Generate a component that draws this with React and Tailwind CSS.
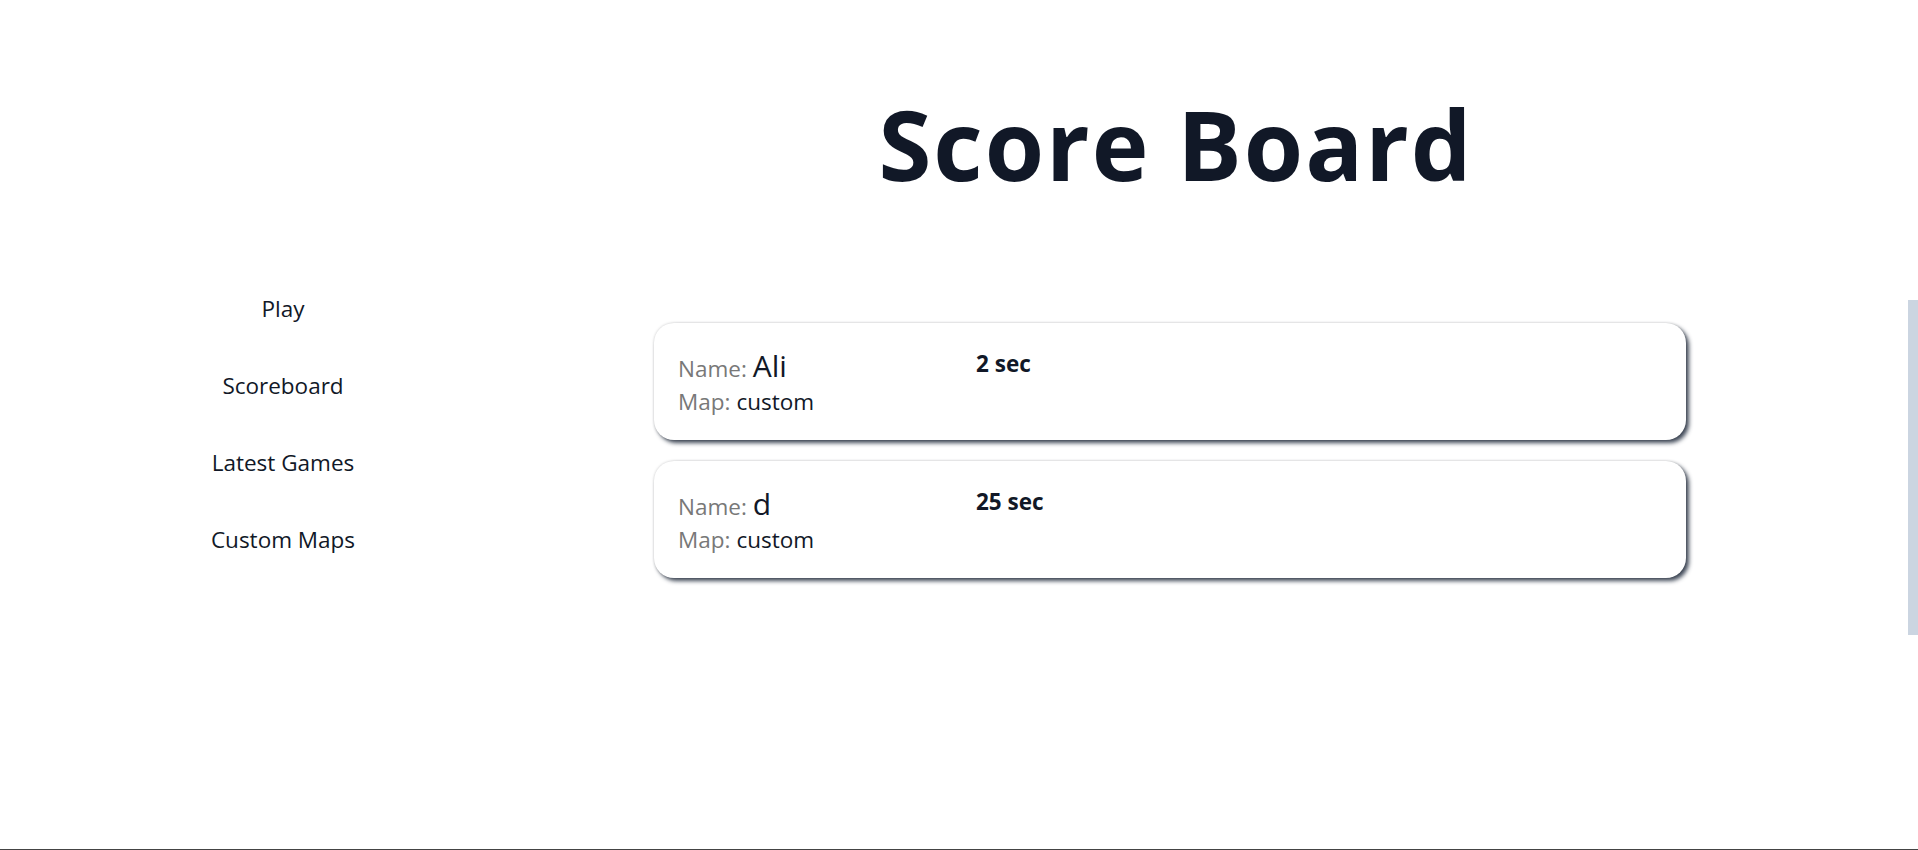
import React from 'react';

const navItems = ['Play', 'Scoreboard', 'Latest Games', 'Custom Maps'];

const scores = [
  { name: 'Ali', map: 'custom', time: '2 sec' },
  { name: 'd', map: 'custom', time: '25 sec' },
];

const ScoreCard = ({ score }) => (
  <div className='bg-white rounded-[20px] pl-6 pr-6 pt-[25px] pb-[23px] flex items-start shadow-[0_0_3px_rgba(0,0,0,0.18),3px_3px_4px_rgba(45,55,72,0.9)]'>
    <div className='w-[298px]'>
      <div className='flex items-baseline gap-[6px]'>
        <span className='text-[22.5px] leading-[30px] text-[#787878]'>Name:</span>
        <span className='text-[30px] leading-[36px] text-[#111827]'>{score.name}</span>
      </div>
      <div className='flex items-baseline gap-[6px] text-[22.5px] leading-[30px] mt-[3px]'>
        <span className='text-[#787878]'>Map:</span>
        <span className='text-[#111827]'>{score.map}</span>
      </div>
    </div>
    <div className='text-[22.5px] leading-[30px] font-bold text-[#111827] mt-px'>{score.time}</div>
  </div>
);

export default function App() {
  return (
    <div className='relative h-[850px] bg-white border-b border-[#444] overflow-hidden' style={{ fontFamily: '"Segoe UI", "Open Sans", "Noto Sans", sans-serif' }}>
      <div className='flex'>
        <nav className='w-[566px] pt-[294px] flex flex-col items-center gap-[47px]'>
          {navItems.map(item => (
            <a key={item} className='text-[22.5px] leading-[30px] text-[#111827] cursor-pointer'>{item}</a>
          ))}
        </nav>
        <main className='pl-[88px] w-[1120px]'>
          <h1 className='mt-[96px] pl-3 text-center text-[96px] leading-none font-bold tracking-[2px] text-[#111827]'>Score Board</h1>
          <div className='mt-[131px] flex flex-col gap-[21px]'>
            {scores.map((s, i) => <ScoreCard key={i} score={s} />)}
          </div>
        </main>
      </div>
      <div className='absolute right-0 top-[300px] w-[10px] h-[335px] bg-[#cbd5e1]' />
    </div>
  );
}
